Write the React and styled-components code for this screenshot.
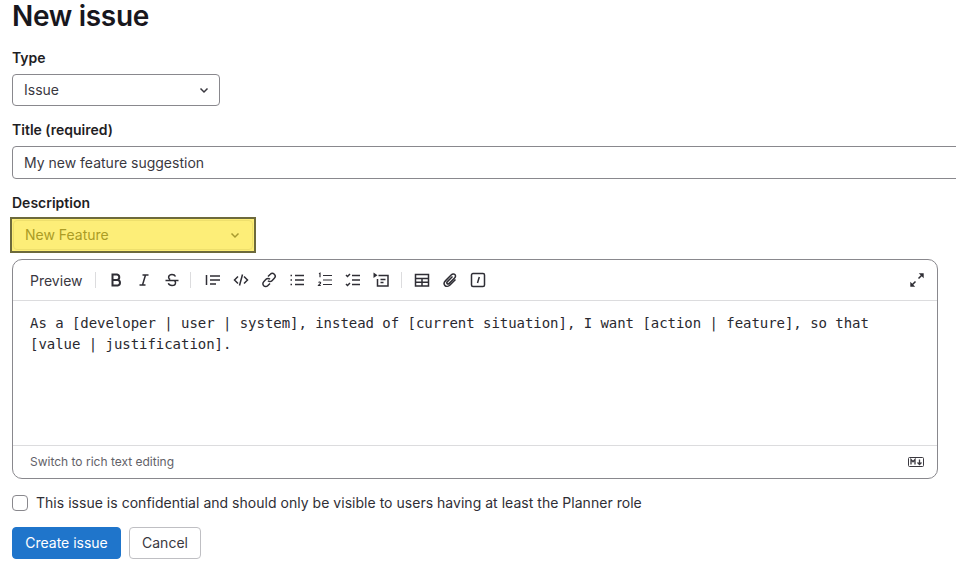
import React from 'react'
import styled, { createGlobalStyle } from 'styled-components'

const GlobalStyle = createGlobalStyle`
  html, body {
    margin: 0;
    padding: 0;
    background: #fff;
    overflow: hidden;
  }
  body {
    font-family: Inter, "Noto Sans", sans-serif;
    font-size: 14px;
    color: #1f1e24;
  }
`

const Page = styled.form`
  width: 956px;
  height: 572px;
  padding: 0 0 0 12px;
  box-sizing: border-box;
  overflow: hidden;
`

const Heading = styled.h1`
  margin: 0;
  height: 32px;
  font-size: 28px;
  line-height: 32px;
  font-weight: 600;
  letter-spacing: -0.3px;
  color: #18171d;
`

const Label = styled.label`
  display: block;
  height: 20px;
  margin-top: ${(p) => p.$top}px;
  margin-bottom: 6px;
  font-size: 14px;
  line-height: 20px;
  font-weight: 600;
  color: #1f1e24;
`

const Select = styled.div`
  display: flex;
  align-items: center;
  justify-content: space-between;
  box-sizing: border-box;
  width: 208px;
  height: 32px;
  padding: 0 7px 1px 11px;
  border: 1px solid #89888d;
  border-radius: 4px;
  color: #3a383f;
`

const TextInput = styled.div`
  display: flex;
  align-items: center;
  box-sizing: border-box;
  width: 1000px;
  height: 33px;
  padding: 0 11px;
  border: 1px solid #89888d;
  border-radius: 4px;
  color: #3a383f;
`

const Highlight = styled.div`
  box-sizing: border-box;
  width: 246px;
  height: 36px;
  margin: -2px 0 6px -2px;
  padding: 1px;
  border: 2px solid #6d6a3c;
  background: #fdee78;
`

const HighlightedSelect = styled.div`
  display: flex;
  align-items: center;
  justify-content: space-between;
  box-sizing: border-box;
  height: 30px;
  padding: 0 9px 1px 11px;
  border: 1px solid #eedf6c;
  border-radius: 4px;
  color: #ab9c25;
`

const Editor = styled.div`
  box-sizing: border-box;
  width: 926px;
  height: 220px;
  display: flex;
  flex-direction: column;
  border: 1px solid #89888d;
  border-radius: 10px;
`

const Toolbar = styled.div`
  display: flex;
  align-items: center;
  box-sizing: border-box;
  height: 41px;
  padding: 0 6px 0 17px;
  border-bottom: 1px solid #dcdcde;
  color: #3a383f;
`

const PreviewTab = styled.span`
  width: 52px;
  margin-right: 13px;
  white-space: nowrap;
  color: #3a383f;
`

const Separator = styled.span`
  width: 1px;
  height: 16px;
  margin: ${(p) => p.$margin};
  background: #dcdcde;
`

const ToolButton = styled.span`
  display: flex;
  align-items: center;
  justify-content: center;
  flex: none;
  width: 28px;
  height: 28px;
  color: #2f2e35;
  margin-left: ${(p) => (p.$push ? 'auto' : '0')};
`

const Glyph = styled.svg`
  width: 16px;
  height: 16px;
  display: block;
  fill: none;
  stroke: currentColor;
  stroke-width: 1.5;
`

const TextArea = styled.div`
  flex: 1;
  padding: 12px 17px 0;
  font-family: "DejaVu Sans Mono", "Liberation Mono", monospace;
  font-size: 14px;
  line-height: 21px;
  letter-spacing: -0.04px;
  color: #2a2930;
  white-space: pre;
`

const EditorFooter = styled.div`
  display: flex;
  align-items: center;
  justify-content: space-between;
  box-sizing: border-box;
  height: 33px;
  padding: 0 13px 0 17px;
  border-top: 1px solid #dcdcde;
  font-size: 12px;
  color: #626168;
`

const FooterLink = styled.span`
  margin-bottom: 2px;
`

const MarkdownMark = styled.svg`
  width: 16px;
  height: 10px;
  display: block;
`

const CheckRow = styled.div`
  display: flex;
  align-items: center;
  gap: 8px;
  height: 18px;
  margin-top: 15px;
  letter-spacing: 0.025px;
  color: #2f2e35;
`

const CheckBox = styled.span`
  box-sizing: border-box;
  width: 16px;
  height: 16px;
  border: 1px solid #89888d;
  border-radius: 4px;
`

const CheckText = styled.span`
  margin-bottom: 2px;
`

const Actions = styled.div`
  display: flex;
  gap: 8px;
  margin-top: 15px;
`

const Button = styled.button`
  box-sizing: border-box;
  height: 32px;
  width: ${(p) => p.$width}px;
  padding: 0 0 2px;
  font: inherit;
  border-radius: 4px;
  border: 1px solid ${(p) => (p.$primary ? '#1f75cb' : '#bfbfc3')};
  background: ${(p) => (p.$primary ? '#1f75cb' : '#fff')};
  color: ${(p) => (p.$primary ? '#fff' : '#3a383f')};
`

const Chevron = ({ color = '#3a383f' }) => (
  <svg width="16" height="16" viewBox="0 0 16 16" fill="none" stroke={color} strokeWidth="1.5">
    <path d="M4.5 6.5 8 10l3.5-3.5" />
  </svg>
)

const icons = {
  bold: <path d="M4.500 2.500h4.500a2.800 2.800 0 0 1 0 5.500H4.500zM4.500 8h5.200a2.800 2.800 0 0 1 0 5.500H4.500z" strokeWidth="2" />,
  italic: <path d="M6.500 3h6M3.500 13h6M9.500 3l-3 10" />,
  strike: <path d="M11.500 4.500C11 3.400 9.800 2.500 8 2.500c-2 0-3.400 1.100-3.400 2.700 0 1 .6 1.900 1.600 2.300M1.500 8.500h13M10.600 8.800c.6.5.9 1.100.9 1.900 0 1.700-1.500 2.800-3.500 2.800-1.900 0-3.200-1-3.700-2.200" />,
  quote: <path d="M1.500 3v10M5 4h10M5 8h10M5 12h6" />,
  code: <path d="M5 4.500 1.500 8 5 11.500M11 4.500 14.500 8 11 11.500M9.500 2.500l-3 11" />,
  link: <path d="M7 4.500 9.300 2.300a2.800 2.800 0 0 1 4 4L11 8.700a2.800 2.800 0 0 1-4 0M9 11.500l-2.300 2.200a2.800 2.800 0 0 1-4-4L5 7.300a2.800 2.800 0 0 1 4 0" />,
  ul: <path d="M1.500 3.500h1.500M1.500 8h1.500M1.500 12.500h1.500M6 3.500h9M6 8h9M6 12.500h9" />,
  ol: <path d="M6 3.500h9M6 8h9M6 12.500h9M2 1.800l1-.6v4M1.500 10.500c.5-.8 2.300-.6 2.100.5-.1.700-1.500 1.400-2.100 2.500h2.300" strokeWidth="1.200" />,
  task: <path d="M7 3.500h8M7 8h8M7 12.500h8M1 3l1.500 1.500L5 2M1 12l1.500 1.500L5 11" />,
  collapsible: (
    <>
      <path d="M5.500 3.500h9.500v10.500H4.500V7M7.500 7.500h5M7.500 10.500h3" />
      <path d="M0.500 0.500v5.500l4-2.700z" fill="currentColor" stroke="none" />
    </>
  ),
  table: <path d="M1.500 2.500h13v11.500h-13zM1.500 6.500h13M1.500 10.200h13M8 6.500V14" />,
  attach: <path d="M13.500 7.500 8 13c-1.600 1.600-3.900 1.700-5 .6-1.200-1.200-1-3.400.6-5l5.800-5.800c1.100-1.100 2.600-1.200 3.500-.3.900.9.800 2.400-.3 3.500L7.200 11.400c-.6.600-1.500.7-2 .2s-.4-1.400.2-2L10.500 4.500" />,
  slash: <path d="M3 1.500h10A1.500 1.500 0 0 1 14.500 3v10a1.500 1.500 0 0 1-1.500 1.500H3A1.500 1.500 0 0 1 1.500 13V3A1.500 1.500 0 0 1 3 1.500zM9.300 5l-1.800 6" />,
  expand: (
    <>
      <path d="M9.500 6.500 13 3M3 13l3.500-3.500" />
      <path d="M9.800 1.300h4.900v4.900zM1.300 9.800v4.900h4.900z" fill="currentColor" stroke="none" />
    </>
  ),
}

const Tool = ({ name, push }) => (
  <ToolButton $push={push}>
    <Glyph viewBox="0 0 16 16">{icons[name]}</Glyph>
  </ToolButton>
)

export default function App() {
  return (
    <Page>
      <GlobalStyle />
      <Heading>New issue</Heading>

      <Label $top={16}>Type</Label>
      <Select>
        Issue
        <Chevron />
      </Select>

      <Label $top={14}>Title (required)</Label>
      <TextInput>My new feature suggestion</TextInput>

      <Label $top={14}>Description</Label>
      <Highlight>
        <HighlightedSelect>
          New Feature
          <Chevron color="#a89a2f" />
        </HighlightedSelect>
      </Highlight>

      <Editor>
        <Toolbar>
          <PreviewTab>Preview</PreviewTab>
          <Separator $margin="0 6px 0 0" />
          <Tool name="bold" />
          <Tool name="italic" />
          <Tool name="strike" />
          <Separator $margin="0 8px 0 4px" />
          <Tool name="quote" />
          <Tool name="code" />
          <Tool name="link" />
          <Tool name="ul" />
          <Tool name="ol" />
          <Tool name="task" />
          <Tool name="collapsible" />
          <Separator $margin="0 6px 0 6px" />
          <Tool name="table" />
          <Tool name="attach" />
          <Tool name="slash" />
          <Tool name="expand" push />
        </Toolbar>
        <TextArea>
          {'As a [developer | user | system], instead of [current situation], I want [action | feature], so that\n[value | justification].'}
        </TextArea>
        <EditorFooter>
          <FooterLink>Switch to rich text editing</FooterLink>
          <MarkdownMark viewBox="0 0 16 10">
            <rect x="0.500" y="0.500" width="15" height="9" rx="1" fill="none" stroke="#3a383f" />
            <path d="M3 7.500v-5l2 2.200 2-2.200v5M11.500 2.500v4.500M9.500 5.500l2 2 2-2" fill="none" stroke="#3a383f" strokeWidth="1.300" />
          </MarkdownMark>
        </EditorFooter>
      </Editor>

      <CheckRow>
        <CheckBox />
        <CheckText>This issue is confidential and should only be visible to users having at least the Planner role</CheckText>
      </CheckRow>

      <Actions>
        <Button type="button" $primary $width={109}>Create issue</Button>
        <Button type="button" $width={72}>Cancel</Button>
      </Actions>
    </Page>
  )
}
